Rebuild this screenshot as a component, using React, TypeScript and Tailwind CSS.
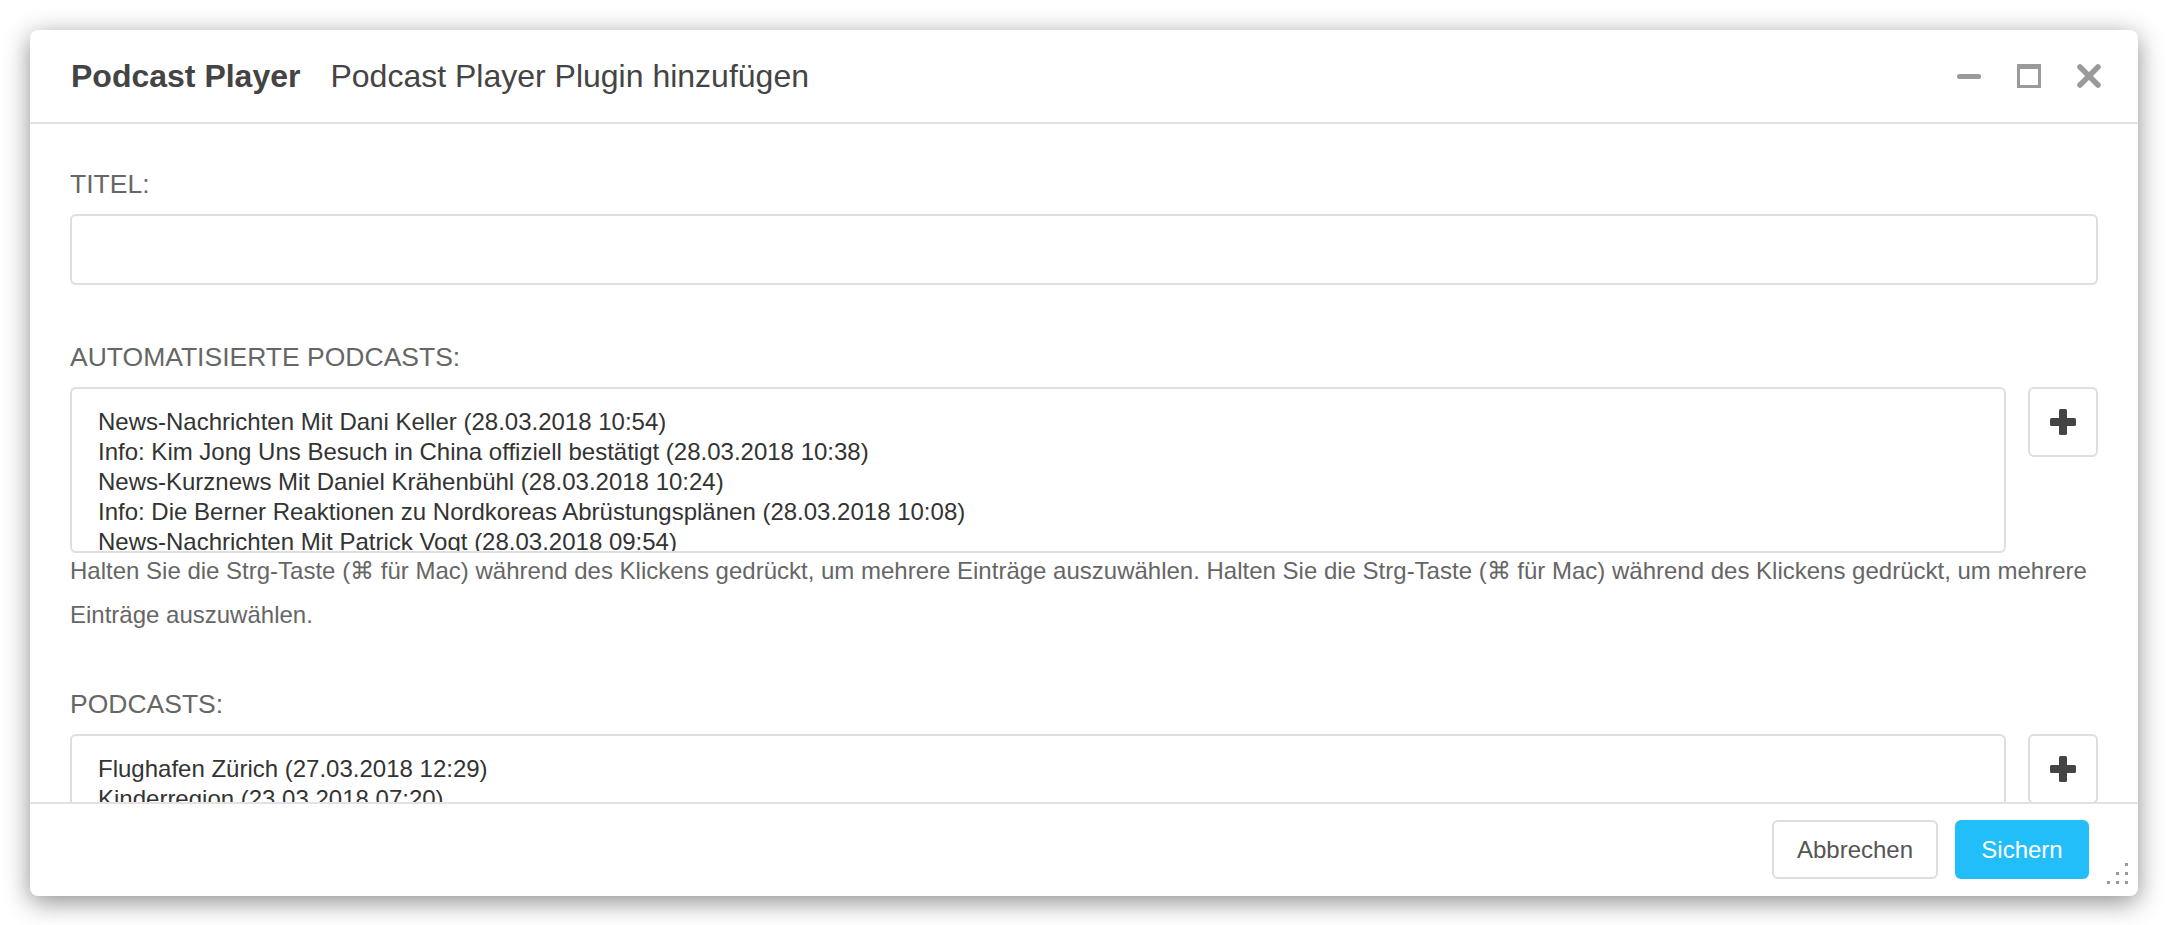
import React from "react";

const AUTO_PODCASTS = [
  "News-Nachrichten Mit Dani Keller (28.03.2018 10:54)",
  "Info: Kim Jong Uns Besuch in China offiziell bestätigt (28.03.2018 10:38)",
  "News-Kurznews Mit Daniel Krähenbühl (28.03.2018 10:24)",
  "Info: Die Berner Reaktionen zu Nordkoreas Abrüstungsplänen (28.03.2018 10:08)",
  "News-Nachrichten Mit Patrick Vogt (28.03.2018 09:54)",
  "Info: Wetter (28.03.2018 09:40)",
];

const PODCASTS = [
  "Flughafen Zürich (27.03.2018 12:29)",
  "Kinderregion (23.03.2018 07:20)",
  "Stadtgespräch (21.03.2018 18:05)",
];

const HELP =
  "Halten Sie die Strg-Taste (⌘ für Mac) während des Klickens gedrückt, um mehrere Einträge auszuwählen. Halten Sie die Strg-Taste (⌘ für Mac) während des Klickens gedrückt, um mehrere Einträge auszuwählen.";

function PlusButton() {
  return (
    <button
      type="button"
      className="flex h-[70px] w-[70px] shrink-0 items-center justify-center rounded-[6px] border-2 border-[#dedede] bg-white"
    >
      <svg width="26" height="26" viewBox="0 0 26 26">
        <rect x="0" y="9" width="26" height="8" rx="1.5" fill="#444" />
        <rect x="9" y="0" width="8" height="26" rx="1.5" fill="#444" />
      </svg>
    </button>
  );
}

function ListBox({ items, height }: { items: string[]; height: string }) {
  return (
    <div
      className={`flex-1 overflow-hidden rounded-[6px] border-2 border-[#dedede] bg-white px-[26px] pt-[18px] ${height}`}
    >
      {items.map((item) => (
        <div key={item} className="whitespace-nowrap text-[24px] leading-[30px] text-[#333]">
          {item}
        </div>
      ))}
    </div>
  );
}

export default function App() {
  return (
    <div
      className="h-[925px] w-[2168px] bg-white pl-[30px] pt-[30px]"
      style={{ fontFamily: '"Liberation Sans", Arial, sans-serif' }}
    >
      <div className="relative flex h-[866px] w-[2108px] flex-col overflow-hidden rounded-[8px] bg-white shadow-[0_6px_26px_rgba(0,0,0,0.45)]">
        {/* header */}
        <div className="flex h-[94px] shrink-0 items-center border-b-2 border-[#e2e2e2] pl-[41px] pr-[37px]">
          <span className="text-[32px] font-bold text-[#444]">Podcast Player</span>
          <span className="ml-[30px] text-[32px] text-[#444]">Podcast Player Plugin hinzufügen</span>
          <div className="ml-auto flex items-center gap-[36px]">
            <div className="flex h-[24px] w-[24px] items-center">
              <div className="h-[5px] w-[24px] rounded-full bg-[#9a9a9a]" />
            </div>
            <div className="h-[24px] w-[24px] border-[3px] border-t-[5px] border-[#9a9a9a]" />
            <svg width="24" height="24" viewBox="0 0 24 24">
              <path d="M3 3L21 21M21 3L3 21" stroke="#9a9a9a" strokeWidth="5.5" strokeLinecap="round" />
            </svg>
          </div>
        </div>

        {/* body */}
        <div className="flex-1 overflow-hidden px-[40px] pt-[45px]">
          <div className="text-[26.5px] leading-[30px] text-[#666]">TITEL:</div>
          <div className="mt-[15px] h-[71px] rounded-[6px] border-2 border-[#dedede]" />

          <div className="mt-[57px] text-[26.5px] leading-[30px] text-[#666]">AUTOMATISIERTE PODCASTS:</div>
          <div className="mt-[15px] flex items-start gap-[22px]">
            <ListBox items={AUTO_PODCASTS} height="h-[166px]" />
            <PlusButton />
          </div>
          <p className="-mt-[4px] text-[24px] leading-[44px] text-[#666]">{HELP}</p>

          <div className="mt-[52px] text-[26.5px] leading-[30px] text-[#666]">PODCASTS:</div>
          <div className="mt-[15px] flex items-start gap-[22px]">
            <ListBox items={PODCASTS} height="h-[166px]" />
            <PlusButton />
          </div>
        </div>

        {/* footer */}
        <div className="flex h-[94px] shrink-0 items-start justify-end gap-[17px] border-t-2 border-[#e2e2e2] pr-[49px] pt-[16px]">
          <button
            type="button"
            className="h-[59px] w-[166px] rounded-[6px] border-2 border-[#dedede] bg-white text-[24px] text-[#555]"
          >
            Abbrechen
          </button>
          <button
            type="button"
            className="h-[59px] w-[134px] rounded-[6px] bg-[#22bef9] text-[24px] text-white"
          >
            Sichern
          </button>
        </div>

        {/* resize grip */}
        <svg className="absolute bottom-[11px] right-[9px]" width="22" height="22" viewBox="0 0 22 22">
          <rect x="18" y="0" width="3" height="3" fill="#999" />
          <rect x="9" y="9" width="3" height="3" fill="#999" />
          <rect x="18" y="9" width="3" height="3" fill="#999" />
          <rect x="0" y="18" width="3" height="3" fill="#999" />
          <rect x="9" y="18" width="3" height="3" fill="#999" />
          <rect x="18" y="18" width="3" height="3" fill="#999" />
        </svg>
      </div>
    </div>
  );
}
